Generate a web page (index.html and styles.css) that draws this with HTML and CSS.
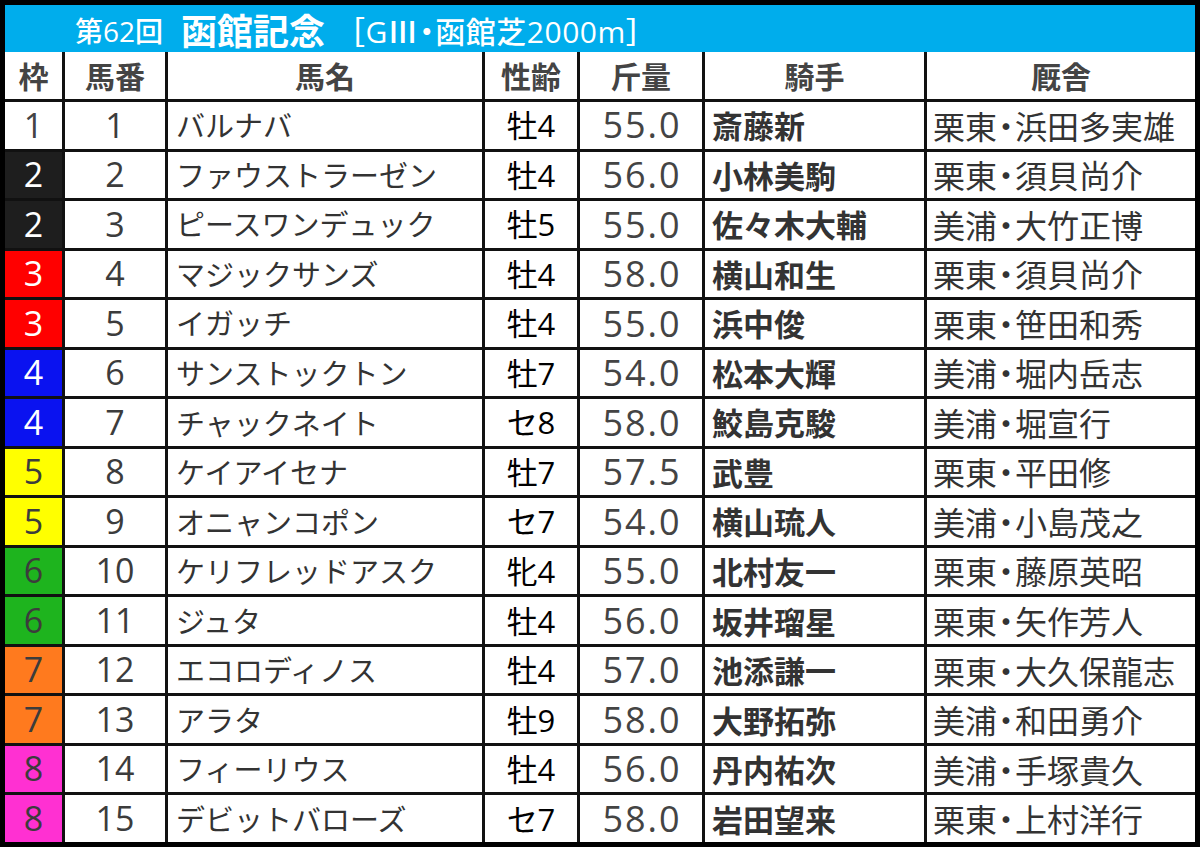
FILE: index.html
```html
<!DOCTYPE html>
<html lang="ja">
<head>
<meta charset="utf-8">
<link rel="stylesheet" href="styles.css">
</head>
<body>
<div class="frame">
  <div class="title">
    <span class="t-num">第62回</span>
    <span class="t-name">函館記念</span>
    <span class="t-sub">［GⅢ<span class="dot">・</span>函館芝2000m］</span>
  </div>
  <div class="grid">
    <div class="h">枠</div><div class="h">馬番</div><div class="h">馬名</div><div class="h">性齢</div><div class="h">斤量</div><div class="h">騎手</div><div class="h">厩舎</div>

    <div class="w w1">1</div><div class="n">1</div><div class="nm">バルナバ</div><div class="s">牡4</div><div class="k">55.0</div><div class="j">斎藤新</div><div class="tr">栗東<span class="dot">・</span>浜田多実雄</div>
    <div class="w w2">2</div><div class="n">2</div><div class="nm">ファウストラーゼン</div><div class="s">牡4</div><div class="k">56.0</div><div class="j">小林美駒</div><div class="tr">栗東<span class="dot">・</span>須貝尚介</div>
    <div class="w w2">2</div><div class="n">3</div><div class="nm">ピースワンデュック</div><div class="s">牡5</div><div class="k">55.0</div><div class="j">佐々木大輔</div><div class="tr">美浦<span class="dot">・</span>大竹正博</div>
    <div class="w w3">3</div><div class="n">4</div><div class="nm">マジックサンズ</div><div class="s">牡4</div><div class="k">58.0</div><div class="j">横山和生</div><div class="tr">栗東<span class="dot">・</span>須貝尚介</div>
    <div class="w w3">3</div><div class="n">5</div><div class="nm">イガッチ</div><div class="s">牡4</div><div class="k">55.0</div><div class="j">浜中俊</div><div class="tr">栗東<span class="dot">・</span>笹田和秀</div>
    <div class="w w4">4</div><div class="n">6</div><div class="nm">サンストックトン</div><div class="s">牡7</div><div class="k">54.0</div><div class="j">松本大輝</div><div class="tr">美浦<span class="dot">・</span>堀内岳志</div>
    <div class="w w4">4</div><div class="n">7</div><div class="nm">チャックネイト</div><div class="s">セ8</div><div class="k">58.0</div><div class="j">鮫島克駿</div><div class="tr">美浦<span class="dot">・</span>堀宣行</div>
    <div class="w w5">5</div><div class="n">8</div><div class="nm">ケイアイセナ</div><div class="s">牡7</div><div class="k">57.5</div><div class="j">武豊</div><div class="tr">栗東<span class="dot">・</span>平田修</div>
    <div class="w w5">5</div><div class="n">9</div><div class="nm">オニャンコポン</div><div class="s">セ7</div><div class="k">54.0</div><div class="j">横山琉人</div><div class="tr">美浦<span class="dot">・</span>小島茂之</div>
    <div class="w w6">6</div><div class="n">10</div><div class="nm">ケリフレッドアスク</div><div class="s">牝4</div><div class="k">55.0</div><div class="j">北村友一</div><div class="tr">栗東<span class="dot">・</span>藤原英昭</div>
    <div class="w w6">6</div><div class="n">11</div><div class="nm">ジュタ</div><div class="s">牡4</div><div class="k">56.0</div><div class="j">坂井瑠星</div><div class="tr">栗東<span class="dot">・</span>矢作芳人</div>
    <div class="w w7">7</div><div class="n">12</div><div class="nm">エコロディノス</div><div class="s">牡4</div><div class="k">57.0</div><div class="j">池添謙一</div><div class="tr">栗東<span class="dot">・</span>大久保龍志</div>
    <div class="w w7">7</div><div class="n">13</div><div class="nm">アラタ</div><div class="s">牡9</div><div class="k">58.0</div><div class="j">大野拓弥</div><div class="tr">美浦<span class="dot">・</span>和田勇介</div>
    <div class="w w8">8</div><div class="n">14</div><div class="nm">フィーリウス</div><div class="s">牡4</div><div class="k">56.0</div><div class="j">丹内祐次</div><div class="tr">美浦<span class="dot">・</span>手塚貴久</div>
    <div class="w w8">8</div><div class="n">15</div><div class="nm">デビットバローズ</div><div class="s">セ7</div><div class="k">58.0</div><div class="j">岩田望来</div><div class="tr">栗東<span class="dot">・</span>上村洋行</div>
  </div>
</div>
</body>
</html>
```

FILE: styles.css
```css
html, body {
  margin: 0;
  padding: 0;
  background: #000;
}
.frame {
  width: 1190px;
  height: 837px;
  padding: 5px;
  background: #000;
  display: flex;
  flex-direction: column;
  font-family: "Open Sans", "Noto Sans CJK JP", sans-serif;
  color: #3a3a3a;
}
.title {
  height: 47px;
  background: #00adec;
  color: #fff;
  display: flex;
  align-items: center;
  padding-left: 70px;
  box-sizing: border-box;
  white-space: nowrap;
  font-family: "Open Sans", "Noto Sans CJK JP", sans-serif;
  line-height: 1;
}
.t-num {
  font-size: 28px;
  font-weight: 500;
  margin-top: 5px;
}
.t-name {
  font-family: "Noto Sans CJK JP", sans-serif;
  font-size: 36px;
  font-weight: 700;
  margin-left: 18px;
}
.t-sub {
  font-size: 30px;
  font-weight: 500;
  margin-left: 10px;
  margin-top: 5px;
  letter-spacing: 0.5px;
}
.dot {
  font-family: "Noto Sans CJK JP", sans-serif;
  font-feature-settings: "palt" 1;
  letter-spacing: 0;
  padding: 0 1px;
}
.grid {
  height: 790px;
  display: grid;
  grid-template-columns: 57px 100px 314px 92px 122px 219px 1fr;
  grid-template-rows: 47px repeat(15, 1fr);
  column-gap: 3px;
  row-gap: 3px;
  background: #111;
}
.grid > div {
  background: #fff;
  display: flex;
  align-items: center;
  white-space: nowrap;
  line-height: 1.1;
}
.h {
  justify-content: center;
  font-family: "Noto Sans CJK JP", sans-serif;
  font-size: 30px;
  font-weight: 700;
  color: #444;
}
.w, .n, .s, .k {
  justify-content: center;
}
.w, .n {
  font-size: 34px;
  color: #3c3c3c;
}
.w1 { background: #fff !important; color: #444; }
.w2 { background: #1e1e1e !important; color: #fff; }
.w3 { background: #ff0000 !important; color: #fff; }
.w4 { background: #0a12f0 !important; color: #fff; }
.w5 { background: #ffff00 !important; }
.w6 { background: #1eb41e !important; }
.w7 { background: #ff7a1e !important; }
.w8 { background: #ff30d2 !important; }
.nm {
  padding-left: 8px;
  font-family: "Noto Sans CJK JP", sans-serif;
  font-size: 29px;
  color: #333;
}
.s {
  font-size: 31px;
  color: #000;
}
.k {
  font-size: 36px;
  letter-spacing: 2px;
  padding-left: 2px;
  color: #444;
}
.j {
  padding-left: 7px;
  font-family: "Noto Sans CJK JP", sans-serif;
  font-size: 31px;
  font-weight: 700;
  color: #333;
}
.tr {
  padding-left: 6px;
  font-family: "Noto Sans CJK JP", sans-serif;
  font-size: 32px;
  color: #333;
}
```
